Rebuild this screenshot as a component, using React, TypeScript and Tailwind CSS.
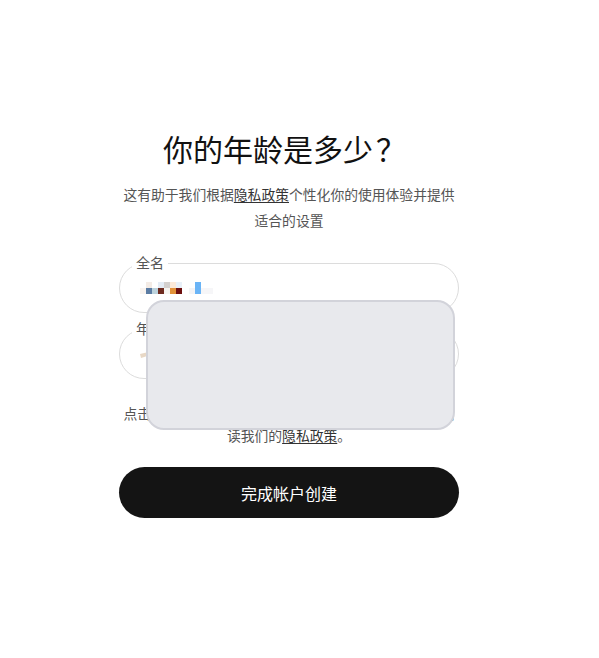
import React from "react";

const font = { fontFamily: '"Noto Sans CJK SC", "Noto Sans", sans-serif' };

function PixelName() {
  const row1: [number, string][] = [
    [6, "#f3ebe5"],
    [18, "#e4ecf5"],
    [24, "#d3d0ce"],
    [30, "#fbe9d8"],
    [36, "#e8f0f8"],
  ];
  const row2: [number, string][] = [
    [0, "#f8f3ef"],
    [6, "#5b7ca3"],
    [12, "#bcd2dc"],
    [18, "#6e2b1f"],
    [24, "#f6f4f0"],
    [30, "#e2923a"],
    [36, "#6c0f0f"],
    [49, "#f4f4f6"],
  ];
  return (
    <svg width="74" height="12" viewBox="0 0 74 12">
      {row1.map(([x, c]) => (
        <rect key={"a" + x} x={x} y={0} width={6} height={6} fill={c} />
      ))}
      {row2.map(([x, c]) => (
        <rect key={"b" + x} x={x} y={6} width={6} height={6} fill={c} />
      ))}
      <rect x={55} y={0} width={6} height={12} fill="#6ab4f6" />
      <rect x={61} y={6} width={12} height={6} fill="#f6f6f8" />
    </svg>
  );
}

function Field({ label, children }: { label: string; children?: React.ReactNode }) {
  return (
    <div className="relative h-[50px] rounded-full border border-[#dcdcdc] flex items-center pl-[20px]">
      <span className="absolute -top-[12px] left-[12px] bg-white px-[4px] text-[14px] leading-[20px] text-[#555]">
        {label}
      </span>
      {children}
    </div>
  );
}

export default function App() {
  return (
    <div className="relative w-[599px] h-[658px] bg-white overflow-hidden" style={font}>
      <div className="ml-[119px] w-[340px] pt-[128px] flex flex-col">
        <h1 className="text-center text-[30px] leading-[40px] font-normal text-[#111] pr-[9px]">
          你的年龄是多少<span className="ml-[3px]">？</span>
        </h1>
        <p className="mt-[13px] text-center text-[13.8px] leading-[26px] text-[#555]">
          这有助于我们根据<span className="underline underline-offset-2 text-[#333]">隐私政策</span>个性化你的使用体验并提供适合的设置
        </p>
        <div className="mt-[30px] flex flex-col gap-[16px]">
          <Field label="全名">
            <PixelName />
          </Field>
          <Field label="年龄">
            <svg width="10" height="6" viewBox="0 0 10 6" className="mt-[2px]">
              <path d="M0 2 Q4 1 9 0 L9 3 Q5 5 1 6 Z" fill="#e8d8c6" />
            </svg>
          </Field>
        </div>
        <p className="mt-[23px] text-center text-[13.8px] leading-[22px] text-[#555]">
          点击创建帐户，即表示你同意我们的使用条款，并已阅读我们的<span className="underline underline-offset-2 text-[#333]">隐私政策</span>。
        </p>
        <button className="mt-[21px] h-[51px] rounded-full bg-[#141414] text-white text-[16px]">
          完成帐户创建
        </button>
      </div>
      <div className="absolute left-[146px] top-[300px] w-[309px] h-[130px] rounded-[18px] bg-[#e8e9ed] border-2 border-[#d2d3da]" />
    </div>
  );
}
